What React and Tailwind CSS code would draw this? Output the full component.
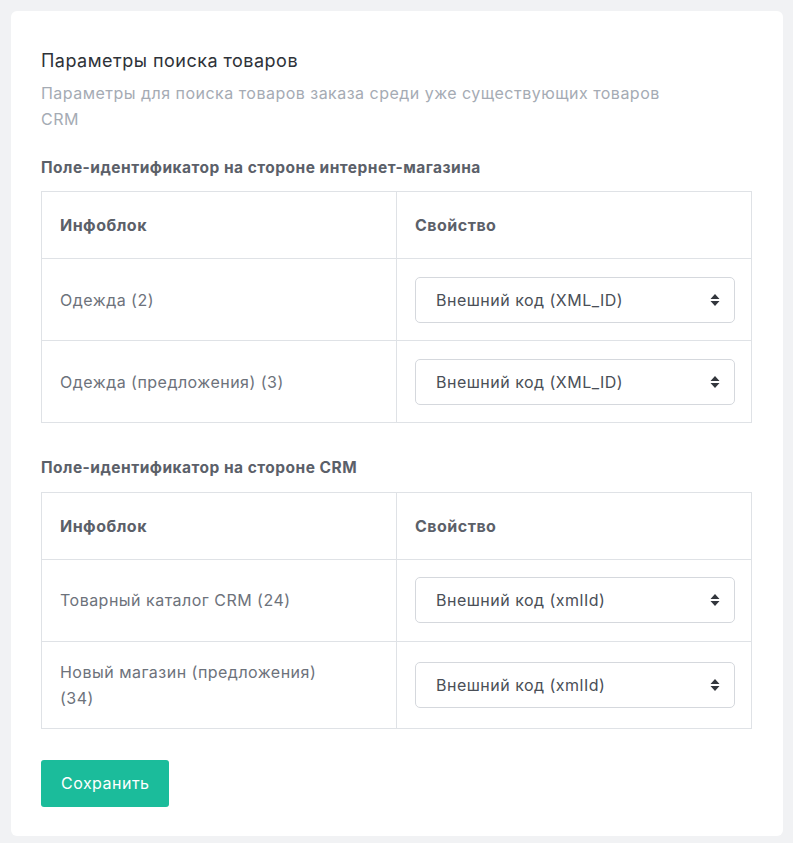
import { useState } from 'react';

function Select({ value, options }) {
  const [v, setV] = useState(value);
  return (
    <div className="relative w-[320px]">
      <select
        value={v}
        onChange={e => setV(e.target.value)}
        className="appearance-none w-full h-[46px] pl-5 pr-10 bg-white border border-[#d5d8dd] rounded-[5px] text-[16px] tracking-[0.03em] text-[#4a4f57] outline-none"
      >
        {options.map(o => <option key={o}>{o}</option>)}
      </select>
      <svg className="absolute right-[15px] top-1/2 -translate-y-1/2 pointer-events-none" width="10" height="14" viewBox="0 0 10 14">
        <path d="M5 1 L9.5 6 H0.5 Z M5 13 L9.5 8 H0.5 Z" fill="#33373d" />
      </svg>
    </div>
  );
}

function ParamTable({ rows, option }) {
  return (
    <table className="w-[711px] border-collapse border border-[#dfe2e6] text-[16px]">
      <thead>
        <tr className="h-[67px]">
          <th className="w-[355px] text-left font-bold text-[#5b6069] pl-[18px] border border-[#dfe2e6]">Инфоблок</th>
          <th className="text-left font-bold text-[#5b6069] pl-[18px] border border-[#dfe2e6]">Свойство</th>
        </tr>
      </thead>
      <tbody>
        {rows.map(r => (
          <tr key={r} className="h-[82px]">
            <td className="pl-[18px] pr-6 py-[17px] text-[#6d727b] leading-[26px] border border-[#dfe2e6]">
              <div className="max-w-[295px]">{r}</div>
            </td>
            <td className="pl-[18px] border border-[#dfe2e6]"><Select value={option} options={[option]} /></td>
          </tr>
        ))}
      </tbody>
    </table>
  );
}

export default function App() {
  return (
    <div className="min-h-[843px] bg-[#f1f2f4] p-[11px] tracking-[0.03em]" style={{ fontFamily: 'Inter, "Noto Sans", sans-serif' }}>
      <div className="w-[772px] bg-white rounded-[6px] pt-[38px] pb-[29px] px-[30px]">
        <h1 className="text-[18px] text-[#2e3238] leading-6">Параметры поиска товаров</h1>
        <p className="mt-[7px] text-[16px] leading-[26px] text-[#a5abb4] w-[680px]">
          Параметры для поиска товаров заказа среди уже существующих товаров<br />CRM
        </p>
        <h2 className="mt-[24px] mb-[12px] text-[15.5px] font-bold text-[#5b6069]">Поле-идентификатор на стороне интернет-магазина</h2>
        <ParamTable rows={['Одежда (2)', 'Одежда (предложения) (3)']} option="Внешний код (XML_ID)" />
        <h2 className="mt-[33px] mb-[12px] text-[15.5px] font-bold text-[#5b6069]">Поле-идентификатор на стороне CRM</h2>
        <ParamTable rows={['Товарный каталог CRM (24)', 'Новый магазин (предложения) (34)']} option="Внешний код (xmlId)" />
        <button className="mt-[31px] h-[47px] px-[20px] rounded-[3px] bg-[#1bbc9b] text-white text-[16px]">Сохранить</button>
      </div>
    </div>
  );
}
